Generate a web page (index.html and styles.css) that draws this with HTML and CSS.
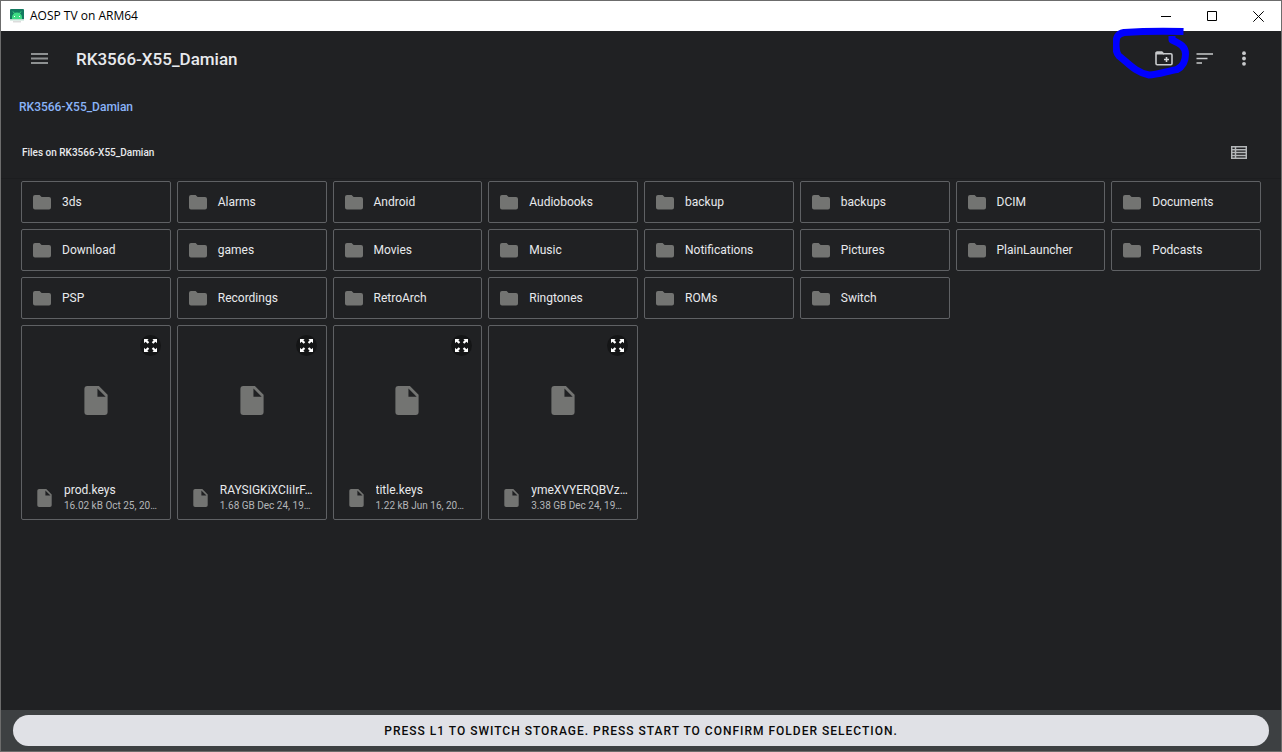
FILE: index.html
```html
<!DOCTYPE html>
<html lang="en">
<head>
<meta charset="utf-8">
<meta name="viewport" content="width=device-width, initial-scale=1">
<title>AOSP TV on ARM64</title>
<link rel="stylesheet" href="styles.css">
</head>
<body>
<svg class="sprite" aria-hidden="true">
  <symbol id="folder" viewBox="0 0 18 15"><path d="M2 0h4.600l2 2H16a2 2 0 0 1 2 2v8.500a2 2 0 0 1-2 2H2a2 2 0 0 1-2-2V2a2 2 0 0 1 2-2z"/></symbol>
  <symbol id="file" viewBox="0 0 24 30"><path fill-rule="evenodd" d="M3 0h12l9 9v18a3 3 0 0 1-3 3H3a3 3 0 0 1-3-3V3a3 3 0 0 1 3-3zM13.500 2.500V11H22z"/></symbol>
  <symbol id="expand" viewBox="0 0 14 14"><path d="M0 0h5L3.600 1.400l2 2-1.600 1.600-2.400-2L0 4.500zM14 0v4.500l-1.600-1.500-2.400 2-1.600-1.600 2-2L9 0zM0 14V9.500l1.600 1.500 2.400-2 1.600 1.600-2 2L5 14zM14 14H9l1.400-1.400-2-2 1.600-1.600 2.400 2L14 9.500z"/></symbol>
</svg>
<div class="window">
  <header class="titlebar">
    <svg class="app-icon" viewBox="0 0 14 14" aria-hidden="true">
      <rect x="0" y="0" width="14" height="11" rx="1" fill="#147a60"/>
      <path d="M2 10V8.500a5 5 0 0 1 10 0V10z" fill="#3ddc84"/>
      <path d="M3 2.500l2 2.500M11 2.500L9 5" stroke="#3ddc84"/>
      <path d="M4 7h1v1H4zM9 7h1v1H9z" fill="#fff"/>
      <path d="M0 10h14v1.500H0z" fill="#b9ddce"/><path d="M3 12h8v1.500H3z" fill="#dcdcdc"/>
    </svg>
    <span class="window-title">AOSP TV on ARM64</span>
    <button class="window-button" aria-label="Minimize"><svg width="11" height="11" viewBox="0 0 11 11"><path d="M0 5.500h10"/></svg></button>
    <button class="window-button" aria-label="Maximize"><svg width="11" height="11" viewBox="0 0 11 11"><path d="M.5.5h9v9h-9z"/></svg></button>
    <button class="window-button" aria-label="Close"><svg width="11" height="11" viewBox="0 0 11 11"><path d="M.3.3l10.400 10.400M10.700.3L.3 10.700"/></svg></button>
  </header>

  <div class="toolbar">
    <button class="icon-button menu" aria-label="Menu"><svg width="18" height="14" viewBox="0 0 18 14"><path d="M1 2h17M1 6.500h17M1 11h17" stroke="#8e9192" stroke-width="2"/></svg></button>
    <h1 class="heading">RK3566-X55_Damian</h1>
    <div class="actions">
      <button class="icon-button" aria-label="New folder"><svg width="18" height="16" viewBox="0 0 18 16"><path d="M1 2.500V12.500a1.200 1.200 0 0 0 1.200 1.200h13.600a1.200 1.200 0 0 0 1.200-1.200V4a1.200 1.200 0 0 0-1.200-1.200H8.500L6.800 1H2.200A1.200 1.200 0 0 0 1 2.500z" fill="none" stroke="#c8cacc" stroke-width="1.600"/><path d="M1 1h6l2 2.500H1z" fill="#c8cacc"/><path d="M9 8.500h5M11.500 6v5" stroke="#d4d6d8" stroke-width="1.600"/></svg></button>
      <button class="icon-button" aria-label="Sort"><svg width="18" height="14" viewBox="0 0 18 14"><path d="M1.500 2h16.500M1.500 6.500h11M1.500 11h5.500" stroke="#c8cacc" stroke-width="1.700"/></svg></button>
      <button class="icon-button" aria-label="More options"><svg width="4" height="16" viewBox="0 0 4 16"><g fill="#c8cacc"><circle cx="2" cy="2.200" r="1.900"/><circle cx="2" cy="7.500" r="1.900"/><circle cx="2" cy="12.800" r="1.900"/></g></svg></button>
    </div>
    <svg class="scribble" width="76" height="54" viewBox="1113 26 76 54" aria-hidden="true"><path d="M1183.500 31.500C1165 31 1138 31.500 1124 32.500C1117 34 1116 38 1116 44C1116 49 1116 53 1119 56C1127 62 1136 73 1149 75C1157 75 1168 71 1177 69.500C1184 66 1185.500 60 1185.500 54C1185.500 47 1181 44 1172 40V36" fill="none" stroke="#00f" stroke-width="7" stroke-linejoin="round"/></svg>
  </div>

  <nav class="breadcrumb" aria-label="Path"><a href="#">RK3566-X55_Damian</a></nav>

  <div class="section-header">
    <h2 class="section-title">Files on RK3566-X55_Damian</h2>
    <button class="icon-button" aria-label="List view"><svg width="16" height="13" viewBox="0 0 16 13"><path d="M.7.7h14.600v11.600H.7zM.7 3.700h14.600M.7 6.500h14.600M.7 9.400h14.600M4.500 0v13" fill="none" stroke="#b4b7b9" stroke-width="1.500"/></svg></button>
  </div>

  <main class="grid">
    <button class="folder"><svg><use href="#folder"/></svg><span>3ds</span></button>
    <button class="folder"><svg><use href="#folder"/></svg><span>Alarms</span></button>
    <button class="folder"><svg><use href="#folder"/></svg><span>Android</span></button>
    <button class="folder"><svg><use href="#folder"/></svg><span>Audiobooks</span></button>
    <button class="folder"><svg><use href="#folder"/></svg><span>backup</span></button>
    <button class="folder"><svg><use href="#folder"/></svg><span>backups</span></button>
    <button class="folder"><svg><use href="#folder"/></svg><span>DCIM</span></button>
    <button class="folder"><svg><use href="#folder"/></svg><span>Documents</span></button>
    <button class="folder"><svg><use href="#folder"/></svg><span>Download</span></button>
    <button class="folder"><svg><use href="#folder"/></svg><span>games</span></button>
    <button class="folder"><svg><use href="#folder"/></svg><span>Movies</span></button>
    <button class="folder"><svg><use href="#folder"/></svg><span>Music</span></button>
    <button class="folder"><svg><use href="#folder"/></svg><span>Notifications</span></button>
    <button class="folder"><svg><use href="#folder"/></svg><span>Pictures</span></button>
    <button class="folder"><svg><use href="#folder"/></svg><span>PlainLauncher</span></button>
    <button class="folder"><svg><use href="#folder"/></svg><span>Podcasts</span></button>
    <button class="folder"><svg><use href="#folder"/></svg><span>PSP</span></button>
    <button class="folder"><svg><use href="#folder"/></svg><span>Recordings</span></button>
    <button class="folder"><svg><use href="#folder"/></svg><span>RetroArch</span></button>
    <button class="folder"><svg><use href="#folder"/></svg><span>Ringtones</span></button>
    <button class="folder"><svg><use href="#folder"/></svg><span>ROMs</span></button>
    <button class="folder"><svg><use href="#folder"/></svg><span>Switch</span></button>

    <article class="file first-file">
      <div class="preview"><svg class="thumb"><use href="#file"/></svg><button class="expand" aria-label="Preview prod.keys"><svg><use href="#expand"/></svg></button></div>
      <div class="details"><svg class="type"><use href="#file"/></svg><div class="labels"><div class="name">prod.keys</div><div class="meta">16.02 kB Oct 25, 20…</div></div></div>
    </article>
    <article class="file">
      <div class="preview"><svg class="thumb"><use href="#file"/></svg><button class="expand" aria-label="Preview RAYSIGKiXCIiIrF"><svg><use href="#expand"/></svg></button></div>
      <div class="details"><svg class="type"><use href="#file"/></svg><div class="labels"><div class="name">RAYSIGKiXCIiIrF…</div><div class="meta">1.68 GB Dec 24, 19…</div></div></div>
    </article>
    <article class="file">
      <div class="preview"><svg class="thumb"><use href="#file"/></svg><button class="expand" aria-label="Preview title.keys"><svg><use href="#expand"/></svg></button></div>
      <div class="details"><svg class="type"><use href="#file"/></svg><div class="labels"><div class="name">title.keys</div><div class="meta">1.22 kB Jun 16, 20…</div></div></div>
    </article>
    <article class="file">
      <div class="preview"><svg class="thumb"><use href="#file"/></svg><button class="expand" aria-label="Preview ymeXVYERQBVz"><svg><use href="#expand"/></svg></button></div>
      <div class="details"><svg class="type"><use href="#file"/></svg><div class="labels"><div class="name">ymeXVYERQBVz…</div><div class="meta">3.38 GB Dec 24, 19…</div></div></div>
    </article>
  </main>

  <footer class="bottom-bar"><button class="confirm">PRESS L1 TO SWITCH STORAGE. PRESS START TO CONFIRM FOLDER SELECTION.</button></footer>
</div>
</body>
</html>
```
FILE: styles.css
```css
* { box-sizing: border-box; }

body {
  margin: 0;
  background: #202124;
  color: #e8eaed;
  font-family: Roboto, "Liberation Sans", sans-serif;
}

button {
  margin: 0;
  padding: 0;
  border: 0;
  background: none;
  color: inherit;
  font: inherit;
}

svg { display: block; flex: none; }

.sprite { position: absolute; width: 0; height: 0; }

.window {
  display: flex;
  flex-direction: column;
  min-height: 100vh;
  border: 1px solid #6c6c6c;
  background: #202123;
}

.titlebar {
  display: flex;
  align-items: center;
  height: 30px;
  padding-left: 9px;
  background: #fff;
  color: #000;
}

.app-icon { width: 14px; height: 14px; }

.window-title {
  flex: 1;
  margin-left: 6px;
  font: 12px/16px "Open Sans", "Noto Sans", sans-serif;
}

.window-button {
  display: grid;
  place-items: center;
  width: 46px;
  height: 30px;
}

.window-button svg { fill: none; stroke: #000; }

.toolbar {
  position: relative;
  display: flex;
  align-items: center;
  height: 56px;
  padding: 0 17px 0 18px;
}

.icon-button {
  display: grid;
  place-items: center;
  width: 40px;
  height: 40px;
}

.heading {
  flex: 1;
  margin: 0 0 0 17px;
  font-size: 17px;
  font-weight: 500;
  line-height: 24px;
}

.actions { display: flex; }

.scribble {
  position: absolute;
  top: -5px;
  right: 92px;
  pointer-events: none;
}

.breadcrumb {
  display: flex;
  align-items: center;
  height: 40px;
  padding: 0 18px;
  font-size: 12px;
  font-weight: 500;
}

.breadcrumb a { color: #8ab4f8; text-decoration: none; }

.section-header {
  display: flex;
  align-items: center;
  justify-content: space-between;
  height: 52px;
  padding: 0 22px 0 21px;
  border-bottom: 1px solid #1c1d1f;
}

.section-title {
  margin: 0;
  font-size: 10px;
  font-weight: 500;
  line-height: 16px;
}

.grid {
  flex: 1;
  display: grid;
  grid-template-columns: repeat(8, minmax(0, 1fr));
  align-content: start;
  gap: 6px;
  padding: 2px 20px 16px;
}

.folder {
  display: flex;
  align-items: center;
  gap: 11px;
  height: 42px;
  padding: 0 11px;
  border: 1px solid #5f6164;
  border-radius: 2px;
  font-size: 12px;
  text-align: left;
}

.folder svg { width: 18px; height: 15px; fill: #737472; }

.file {
  border: 1px solid #5f6164;
  border-radius: 2px;
}

.first-file { grid-column: 1; }

.preview {
  position: relative;
  display: grid;
  place-items: center;
  height: 148px;
}

.thumb { width: 24px; height: 29px; fill: #737472; }

.expand {
  position: absolute;
  top: 9px;
  right: 9px;
  display: grid;
  place-items: center;
  width: 21px;
  height: 21px;
  border-radius: 50%;
  background: #141516;
}

.expand svg { width: 13px; height: 13px; fill: #fff; }

.details {
  display: flex;
  align-items: center;
  gap: 12px;
  height: 45px;
  padding: 2px 8px 0 15px;
}

.type { width: 15px; height: 18px; fill: #737472; }

.labels { min-width: 0; }

.name, .meta {
  overflow: hidden;
  white-space: nowrap;
}

.name { font-size: 12px; line-height: 16px; }

.meta { color: #b4b6b9; font-size: 10px; line-height: 15px; }

.bottom-bar {
  display: flex;
  height: 41px;
  padding: 5px 12px;
  background: #3d4042;
}

.confirm {
  flex: 1;
  border-radius: 16px;
  background: #e0e1e6;
  color: #0a0a0a;
  font-size: 12px;
  font-weight: 500;
  letter-spacing: 1px;
}
```
